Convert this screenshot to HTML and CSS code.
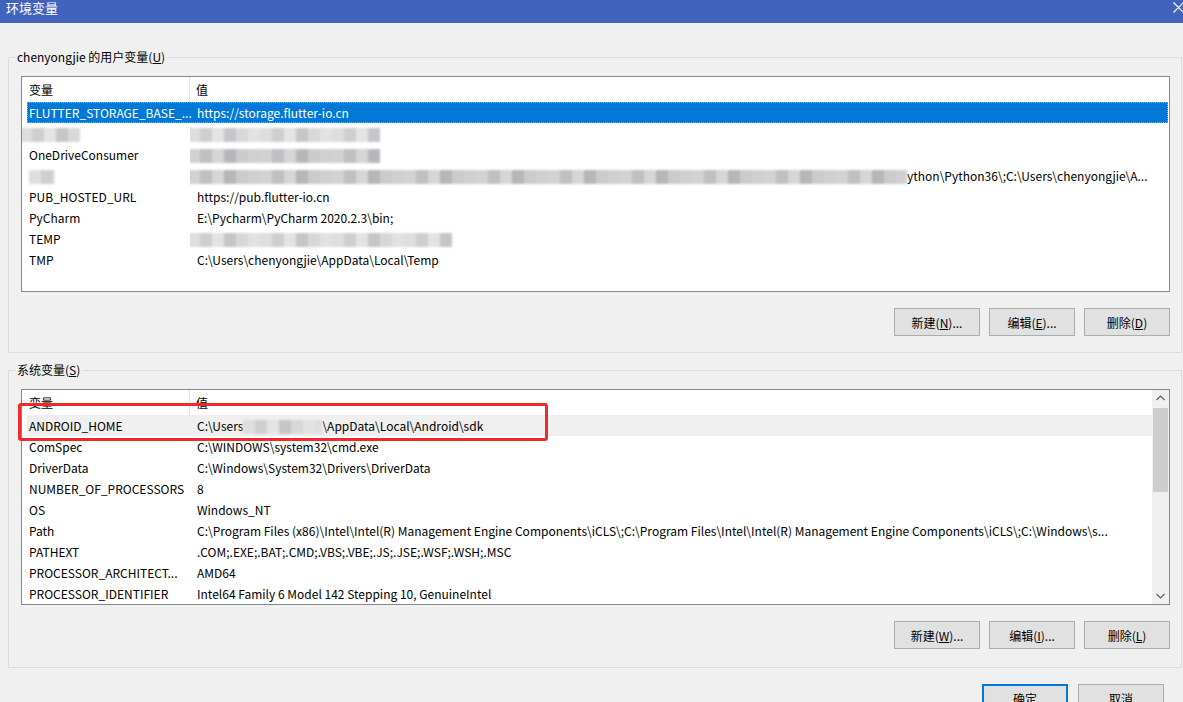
FILE: index.html
```html
<!DOCTYPE html>
<html lang="zh-CN">
<head>
    <meta charset="UTF-8">
    <meta name="viewport" content="width=device-width, initial-scale=1.0">
    <title>环境变量</title>
    <link rel="stylesheet" href="styles.css">
</head>
<body>
    <div class="titlebar">
        <span class="title">环境变量</span>
        <svg class="close" width="11" height="11" viewBox="0 0 11 11">
            <path d="M0.5 0.5 L10.5 10.5 M10.5 0.5 L0.5 10.5" stroke="#fff" stroke-width="1.1" fill="none"/>
        </svg>
    </div>

    <div class="content">
        <div class="group">
            <div class="group-title">chenyongjie 的用户变量(<u>U</u>)</div>
            <div class="list">
                <div class="list-main">
                    <div class="list-head">
                        <div class="col-name">变量</div>
                        <div class="col-value">值</div>
                    </div>
                    <div class="row selected">
                        <div class="cell-name">FLUTTER_STORAGE_BASE_...</div>
                        <div class="cell-value">https://storage.flutter-io.cn</div>
                    </div>
                    <div class="row">
                        <div class="cell-name"><span class="blur blur-name"></span></div>
                        <div class="cell-value"><span class="blur blur-short"></span></div>
                    </div>
                    <div class="row">
                        <div class="cell-name">OneDriveConsumer</div>
                        <div class="cell-value"><span class="blur blur-short dark"></span></div>
                    </div>
                    <div class="row">
                        <div class="cell-name"><span class="blur blur-tiny"></span></div>
                        <div class="cell-value"><span class="blur blur-long dark"></span>ython\Python36\;C:\Users\chenyongjie\A...</div>
                    </div>
                    <div class="row">
                        <div class="cell-name">PUB_HOSTED_URL</div>
                        <div class="cell-value">https://pub.flutter-io.cn</div>
                    </div>
                    <div class="row">
                        <div class="cell-name">PyCharm</div>
                        <div class="cell-value">E:\Pycharm\PyCharm 2020.2.3\bin;</div>
                    </div>
                    <div class="row">
                        <div class="cell-name">TEMP</div>
                        <div class="cell-value"><span class="blur blur-mid"></span></div>
                    </div>
                    <div class="row">
                        <div class="cell-name">TMP</div>
                        <div class="cell-value">C:\Users\chenyongjie\AppData\Local\Temp</div>
                    </div>
                </div>
            </div>
            <div class="buttons">
                <button class="btn">新建(<u>N</u>)...</button>
                <button class="btn">编辑(<u>E</u>)...</button>
                <button class="btn">删除(<u>D</u>)</button>
            </div>
        </div>

        <div class="group system">
            <div class="group-title">系统变量(<u>S</u>)</div>
            <div class="list">
                <div class="list-main">
                    <div class="list-head">
                        <div class="col-name">变量</div>
                        <div class="col-value">值</div>
                    </div>
                    <div class="row hover">
                        <div class="cell-name">ANDROID_HOME</div>
                        <div class="cell-value">C:\Users<span class="blur blur-user"></span>\AppData\Local\Android\sdk</div>
                    </div>
                    <div class="row">
                        <div class="cell-name">ComSpec</div>
                        <div class="cell-value">C:\WINDOWS\system32\cmd.exe</div>
                    </div>
                    <div class="row">
                        <div class="cell-name">DriverData</div>
                        <div class="cell-value">C:\Windows\System32\Drivers\DriverData</div>
                    </div>
                    <div class="row">
                        <div class="cell-name">NUMBER_OF_PROCESSORS</div>
                        <div class="cell-value">8</div>
                    </div>
                    <div class="row">
                        <div class="cell-name">OS</div>
                        <div class="cell-value">Windows_NT</div>
                    </div>
                    <div class="row">
                        <div class="cell-name">Path</div>
                        <div class="cell-value">C:\Program Files (x86)\Intel\Intel(R) Management Engine Components\iCLS\;C:\Program Files\Intel\Intel(R) Management Engine Components\iCLS\;C:\Windows\s...</div>
                    </div>
                    <div class="row">
                        <div class="cell-name">PATHEXT</div>
                        <div class="cell-value">.COM;.EXE;.BAT;.CMD;.VBS;.VBE;.JS;.JSE;.WSF;.WSH;.MSC</div>
                    </div>
                    <div class="row">
                        <div class="cell-name">PROCESSOR_ARCHITECT...</div>
                        <div class="cell-value">AMD64</div>
                    </div>
                    <div class="row">
                        <div class="cell-name">PROCESSOR_IDENTIFIER</div>
                        <div class="cell-value">Intel64 Family 6 Model 142 Stepping 10, GenuineIntel</div>
                    </div>
                </div>
                <div class="scrollbar">
                    <svg class="arrow" width="17" height="17" viewBox="0 0 17 17">
                        <path d="M4.5 10 L8.5 6 L12.5 10" stroke="#606060" stroke-width="1.2" fill="none"/>
                    </svg>
                    <div class="thumb"></div>
                    <div class="track"></div>
                    <svg class="arrow" width="17" height="17" viewBox="0 0 17 17">
                        <path d="M4.5 7 L8.5 11 L12.5 7" stroke="#606060" stroke-width="1.2" fill="none"/>
                    </svg>
                </div>
                <div class="mark"></div>
            </div>
            <div class="buttons">
                <button class="btn">新建(<u>W</u>)...</button>
                <button class="btn">编辑(<u>I</u>)...</button>
                <button class="btn">删除(<u>L</u>)</button>
            </div>
        </div>

        <div class="dialog-buttons">
            <button class="btn primary">确定</button>
            <button class="btn">取消</button>
        </div>
    </div>
</body>
</html>
```

FILE: styles.css
```css
html, body {
    margin: 0;
    height: 100%;
    overflow: hidden;
}

body {
    background: #f0f0f0;
    color: #000;
    font-family: "Noto Sans CJK SC", "Noto Sans", sans-serif;
    font-size: 12px;
}

.titlebar {
    height: 23px;
    background: #4263bd;
    display: flex;
    justify-content: space-between;
    align-items: flex-start;
    padding-left: 6px;
}

.title {
    color: #fff;
    font-size: 13px;
    line-height: 15px;
}

.close {
    margin-top: 2px;
    margin-right: -1px;
}

.content {
    padding: 0 1px 0 8px;
}

.group {
    border: 1px solid #dcdcdc;
    padding: 0 11px 16px 12px;
    margin-top: 17px;
}

.group:first-child {
    margin-top: 34px;
}

.group.system {
    padding-bottom: 18px;
}

.group-title {
    width: fit-content;
    margin: -9px 0 0 -6px;
    padding: 0 2px;
    line-height: 16px;
    background: #f0f0f0;
}

.list {
    position: relative;
    margin-top: 11px;
    height: 214px;
    border: 1px solid #828790;
    background: #fff;
    display: flex;
}

.list-main {
    flex: 1;
    min-width: 0;
    overflow: hidden;
}

.list-head {
    display: flex;
    height: 25px;
    line-height: 25px;
}

.col-name {
    width: 168px;
    box-sizing: border-box;
    padding-left: 7px;
    border-right: 1px solid #e5e5e5;
}

.col-value {
    padding-left: 6px;
}

.row {
    display: flex;
    height: 21px;
    line-height: 21px;
    margin: 0 1px 0 5px;
    white-space: nowrap;
}

.row.selected {
    background: #0078d7;
    color: #fff;
    outline: 1px dotted #f0a030;
    outline-offset: -1px;
}

.row.hover {
    background: #efefef;
    margin-right: 0;
}

.cell-name {
    width: 163px;
    flex: none;
    box-sizing: border-box;
    padding-left: 2px;
}

.cell-value {
    flex: 1;
    min-width: 0;
    padding-left: 7px;
    overflow: hidden;
}

.blur {
    display: inline-block;
    height: 14px;
    vertical-align: -3px;
    background: repeating-linear-gradient(90deg,
        #dedede 0 12px, #cfcfd2 12px 24px, #e4e4e4 24px 36px,
        #c6c6ca 36px 48px, #d8d8d8 48px 60px, #e2e2e2 60px 72px);
    filter: blur(1px);
}

.blur.dark {
    background: repeating-linear-gradient(90deg,
        #d2d2d2 0 12px, #bfbfc4 12px 24px, #d6d6d6 24px 36px,
        #b6b6bb 36px 48px, #cbcbcb 48px 60px, #d0d0d0 60px 72px);
}

.blur-name {
    width: 60px;
    margin-left: -9px;
}

.blur-tiny {
    width: 26px;
}

.blur-short {
    width: 192px;
    margin-left: -9px;
}

.blur-mid {
    width: 264px;
    margin-left: -9px;
}

.blur-long {
    width: 719px;
    margin-left: -9px;
}

.blur-user {
    width: 79px;
}

.scrollbar {
    width: 17px;
    flex: none;
    background: #f0f0f0;
    display: flex;
    flex-direction: column;
}

.arrow {
    display: block;
    flex: none;
}

.thumb {
    height: 84px;
    margin: 1px 1px 0 1px;
    background: #cdcdcd;
}

.track {
    flex: 1;
}

.mark {
    position: absolute;
    left: -4px;
    top: 13px;
    width: 524px;
    height: 32px;
    border: 3px solid #ee2a2a;
    border-radius: 3px;
}

.buttons {
    display: flex;
    justify-content: flex-end;
    gap: 9px;
    margin-top: 16px;
}

.btn {
    width: 86px;
    height: 28px;
    padding: 0;
    background: #e1e1e1;
    border: 1px solid #adadad;
    font-family: inherit;
    font-size: 12px;
    color: #000;
}

.btn.primary {
    border: 2px solid #0078d7;
}

.dialog-buttons {
    display: flex;
    justify-content: flex-end;
    gap: 10px;
    margin-top: 16px;
    padding-right: 18px;
}

.dialog-buttons .btn {
    width: 86px;
}
```
